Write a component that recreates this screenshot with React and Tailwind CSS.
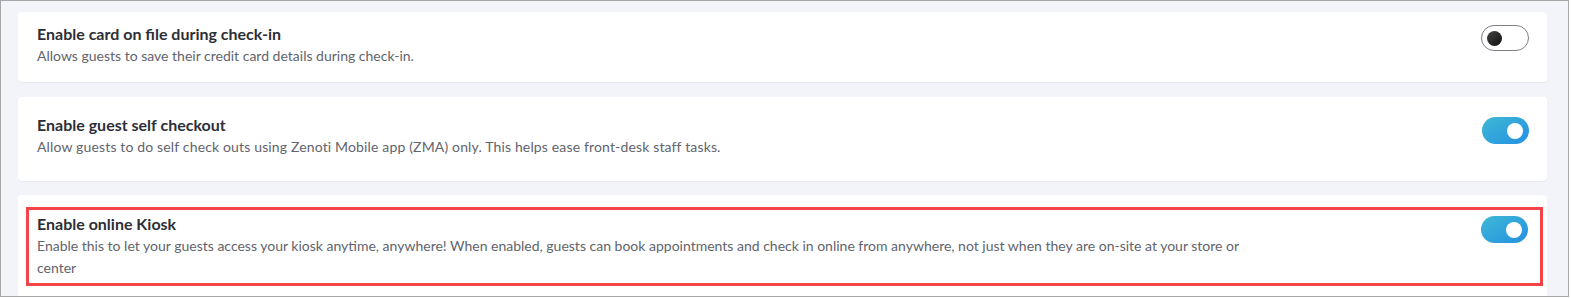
import React from 'react';

const settings = [
  {
    id: 'card-on-file',
    title: 'Enable card on file during check-in',
    description: 'Allows guests to save their credit card details during check-in.',
    enabled: false,
  },
  {
    id: 'self-checkout',
    title: 'Enable guest self checkout',
    description:
      'Allow guests to do self check outs using Zenoti Mobile app (ZMA) only. This helps ease front-desk staff tasks.',
    enabled: true,
    descClass: 'tracking-[0.15px]',
  },
  {
    id: 'online-kiosk',
    title: 'Enable online Kiosk',
    description:
      'Enable this to let your guests access your kiosk anytime, anywhere! When enabled, guests can book appointments and check in online from anywhere, not just when they are on-site at your store or center',
    enabled: true,
    highlighted: true,
  },
];

const Toggle = ({ on }) => {
  if (on) {
    return (
      <div className="flex h-[27px] w-[47px] shrink-0 items-center justify-end rounded-full bg-linear-to-br from-[#3fb8d4] to-[#2690e2] pr-[6px]">
        <div className="h-[16px] w-[16px] rounded-full bg-white" />
      </div>
    );
  }
  return (
    <div className="flex h-[26px] w-[48px] shrink-0 items-center rounded-full border border-[#7b7f8a] bg-white pl-[5px]">
      <div className="h-[15px] w-[15px] rounded-full bg-linear-to-br from-[#454545] to-[#111111]" />
    </div>
  );
};

const SettingText = ({ title, description, wide, descClass = '' }) => (
  <div className={wide ? 'max-w-[1205px]' : ''}>
    <h3 className="text-[16px] font-bold leading-[22px] text-[#2e2f36]">{title}</h3>
    <p className={`text-[14px] leading-[22px] text-[#62646d] ${descClass}`}>{description}</p>
  </div>
);

const SettingCard = ({ setting, className }) => {
  if (setting.highlighted) {
    return (
      <div className={`rounded bg-white pt-[12px] pl-[8px] pr-[4px] ${className}`}>
        {/* annotation box */}
        <div className="flex items-start justify-between border-[3px] border-[#f4444a] pt-[3px] pb-[4px] pl-[8px] pr-[12px]">
          <SettingText title={setting.title} description={setting.description} wide />
          <div className="pt-[3px]">
            <Toggle on={setting.enabled} />
          </div>
        </div>
      </div>
    );
  }
  return (
    <div className={`flex items-start justify-between rounded bg-white pl-[19px] pr-[18px] shadow-[0_1px_1px_rgba(0,0,0,0.05)] ${className}`}>
      <SettingText title={setting.title} description={setting.description} descClass={setting.descClass} />
      <Toggle on={setting.enabled} />
    </div>
  );
};

export default function App() {
  return (
    <div className="h-[298px] w-[1571px] overflow-hidden bg-white" style={{ fontFamily: 'Lato, "Open Sans", sans-serif' }}>
      <div className="h-[297px] w-[1569px] overflow-hidden border border-[#a7a7a7] bg-[#f3f4f9] pt-[11px] pl-[17px] pr-[21px]">
        <div className="flex flex-col">
          <SettingCard setting={settings[0]} className="h-[70px] pt-[11px] [&>div:last-child]:mt-[2px]" />
          <SettingCard setting={settings[1]} className="mt-[15px] h-[84px] pt-[17px] [&>div:last-child]:mt-[3px]" />
          <SettingCard setting={settings[2]} className="mt-[14px] h-[120px]" />
        </div>
      </div>
    </div>
  );
}
